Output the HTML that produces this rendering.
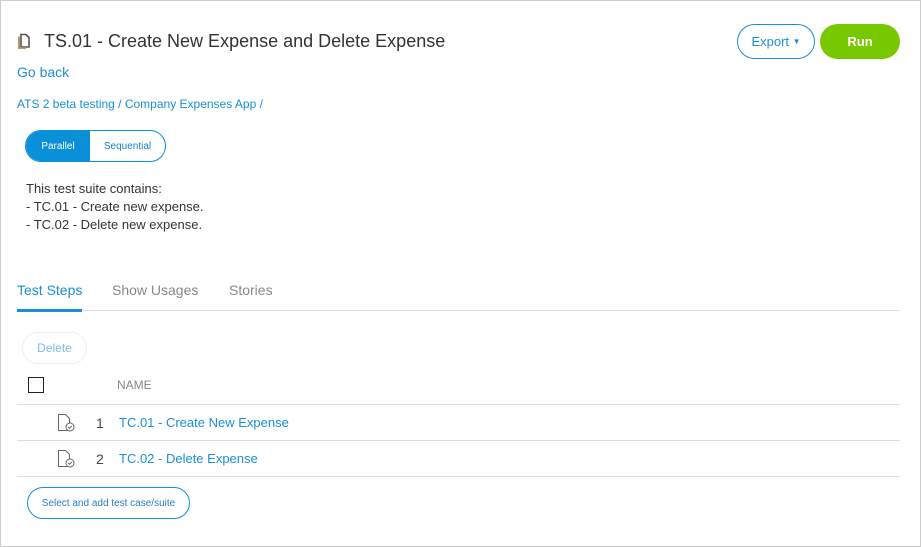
<!DOCTYPE html>
<html><head><style>
*{margin:0;padding:0;box-sizing:border-box}
body{width:921px;height:547px;background:#fff;font-family:"Liberation Sans",sans-serif;position:relative;overflow:hidden}
.frame{position:absolute;left:0;top:0;width:921px;height:547px;border:1px solid #ccc}
.a{position:absolute;white-space:nowrap}
.blue{color:#1a8fd9}
</style></head><body>
<div class="frame"></div>
<svg class="a" style="left:17px;top:33px" width="14" height="16" viewBox="0 0 14 16"><path d="M4 1.5h5l3 3v9.5H4z" fill="none" stroke="#555" stroke-width="1.6"/><path d="M2 3.5v11.5h7" fill="none" stroke="#b08a5a" stroke-width="1.8"/></svg>
<div class="a" style="left:44px;top:31px;font-size:18px;color:#333">TS.01 - Create New Expense and Delete Expense</div>
<div class="a blue" style="left:17px;top:64px;font-size:14px">Go back</div>
<div class="a blue" style="left:17px;top:97px;font-size:12px">ATS 2 beta testing / Company Expenses App /</div>
<div class="a" style="left:25px;top:130px;width:141px;height:32px;border:1px solid #0a90d8;border-radius:16px;overflow:hidden;display:flex;font-size:10px">
<div style="width:64px;background:#0a90d8;color:#fff;display:flex;align-items:center;justify-content:center">Parallel</div>
<div style="flex:1;color:#1a7fc9;display:flex;align-items:center;justify-content:center">Sequential</div></div>
<div class="a" style="left:26px;top:180px;font-size:13px;color:#333;line-height:18px">This test suite contains:<br>- TC.01 - Create new expense.<br>- TC.02 - Delete new expense.</div>
<div class="a" style="left:737px;top:24px;width:78px;height:35px;border:1px solid #1a8fd9;border-radius:18px;color:#1a8fd9;font-size:13px;display:flex;align-items:center;justify-content:center">Export&nbsp;<span style="font-size:8px">▼</span></div>
<div class="a" style="left:820px;top:24px;width:80px;height:35px;background:#78c800;border-radius:18px;color:#fff;font-size:13px;font-weight:bold;display:flex;align-items:center;justify-content:center">Run</div>
<div class="a" style="left:17px;top:282px;font-size:14px;color:#1a8fd9">Test Steps</div>
<div class="a" style="left:112px;top:282px;font-size:14px;color:#888">Show Usages</div>
<div class="a" style="left:229px;top:282px;font-size:14px;color:#888">Stories</div>
<div class="a" style="left:17px;top:310px;width:883px;height:1px;background:#ddd"></div>
<div class="a" style="left:17px;top:309px;width:65px;height:3px;background:#1a8fd9"></div>
<div class="a" style="left:22px;top:332px;width:65px;height:32px;border:1px solid #eee;border-radius:16px;color:#7dbbe8;font-size:12px;display:flex;align-items:center;justify-content:center">Delete</div>
<div class="a" style="left:28px;top:377px;width:16px;height:16px;border:1.5px solid #222"></div>
<div class="a" style="left:117px;top:378px;font-size:12px;color:#888">NAME</div>
<div class="a" style="left:17px;top:404px;width:883px;height:1px;background:#ddd"></div>
<div class="a" style="left:17px;top:440px;width:883px;height:1px;background:#ddd"></div>
<div class="a" style="left:17px;top:476px;width:883px;height:1px;background:#ddd"></div>
<svg class="a" style="left:57px;top:413px" width="20" height="20" viewBox="0 0 20 20"><path d="M1.5 1.5h7l4 4v12h-11z" fill="none" stroke="#666" stroke-width="1"/><circle cx="13" cy="14" r="4" fill="#fff" stroke="#666"/><path d="M11.2 14l1.3 1.3 2.3-2.3" fill="none" stroke="#666"/></svg>
<svg class="a" style="left:57px;top:449px" width="20" height="20" viewBox="0 0 20 20"><path d="M1.5 1.5h7l4 4v12h-11z" fill="none" stroke="#666" stroke-width="1"/><circle cx="13" cy="14" r="4" fill="#fff" stroke="#666"/><path d="M11.2 14l1.3 1.3 2.3-2.3" fill="none" stroke="#666"/></svg>
<div class="a" style="left:96px;top:415px;font-size:14px;color:#444">1</div>
<div class="a blue" style="left:119px;top:415px;font-size:13px">TC.01 - Create New Expense</div>
<div class="a" style="left:96px;top:451px;font-size:14px;color:#444">2</div>
<div class="a blue" style="left:119px;top:451px;font-size:13px">TC.02 - Delete Expense</div>
<div class="a" style="left:27px;top:487px;width:163px;height:32px;border:1px solid #1a8fd9;border-radius:16px;color:#2a7cc0;font-size:10px;display:flex;align-items:center;justify-content:center">Select and add test case/suite</div>
</body></html>
